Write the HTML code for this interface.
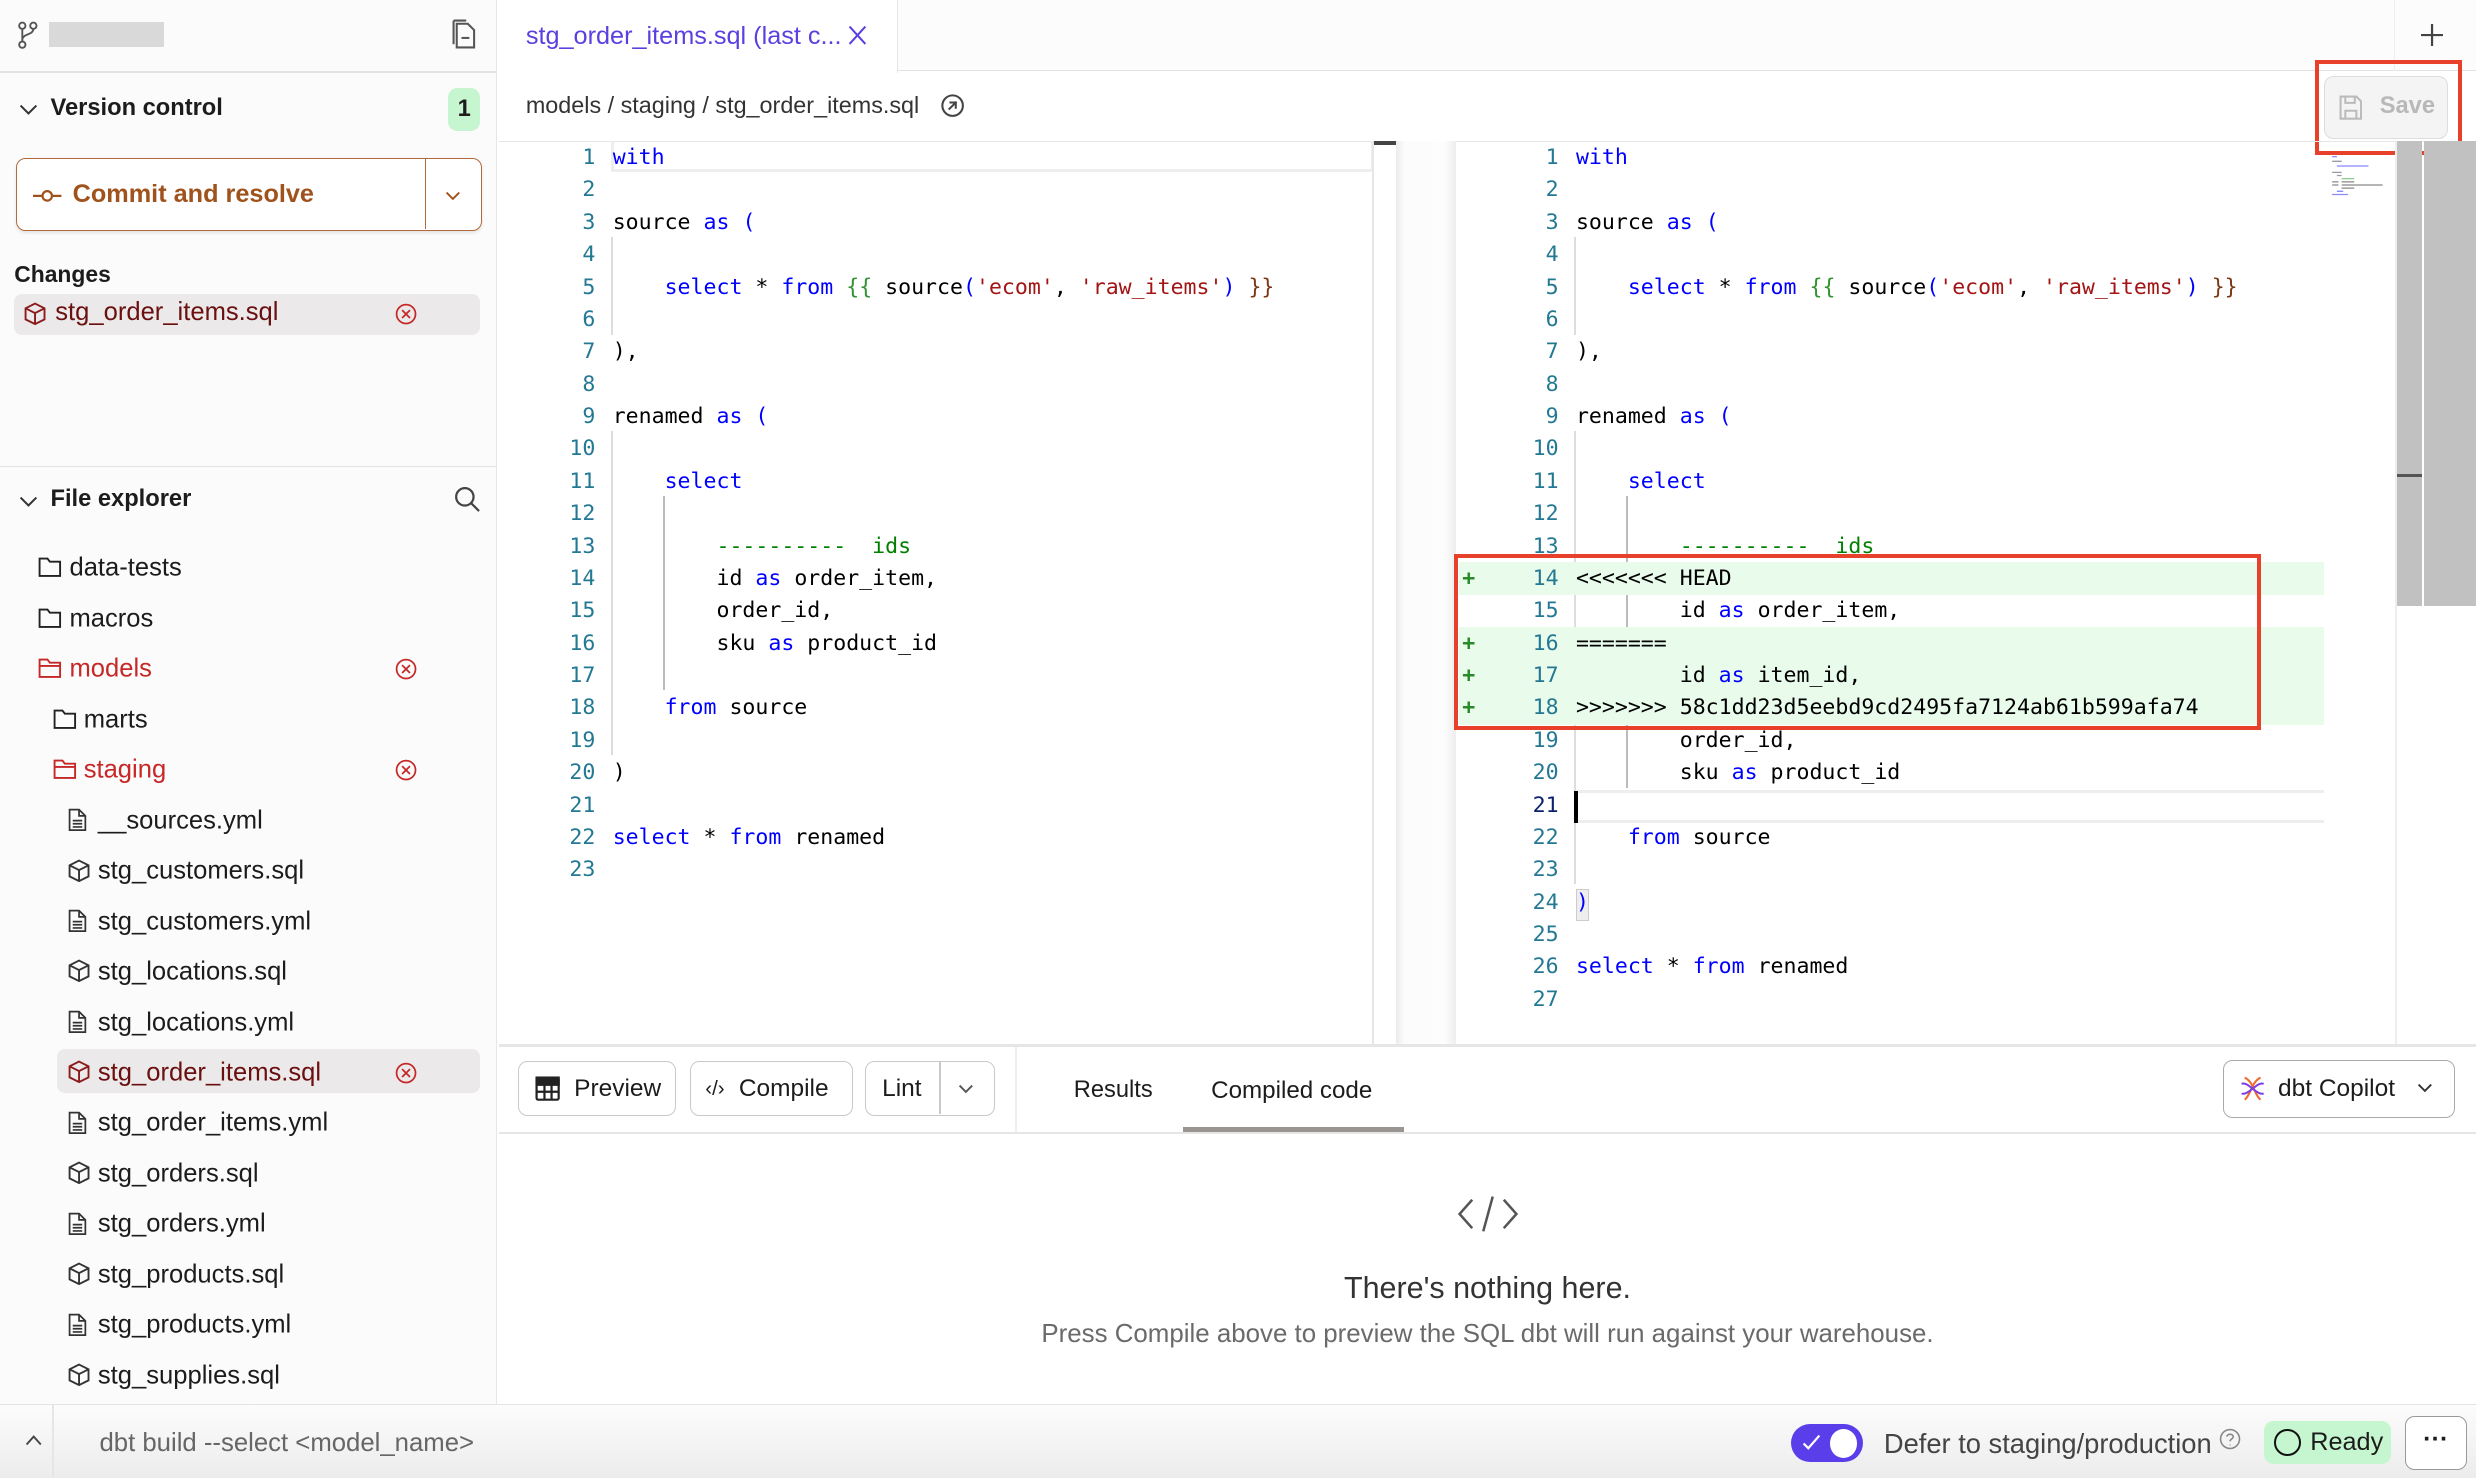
<!DOCTYPE html>
<html><head><meta charset="utf-8">
<style>
html{zoom:1.5791}
*{box-sizing:border-box;margin:0;padding:0}
body{width:1568px;height:936px;overflow:hidden;position:relative;background:#fff;font-family:"Liberation Sans",Arial,sans-serif;color:#1c1c1c}
.a{position:absolute}
.side{left:0;top:0;width:315px;height:890px;background:#fbfbfb;border-right:1px solid #e6e6e6}
.t{position:absolute;font-size:15px;white-space:nowrap}
.tree .t{transform:translateY(-50%);font-size:16.2px}
.code{font-family:"DejaVu Sans Mono","Liberation Mono",monospace;font-size:13.65px;line-height:20.5px;white-space:pre;color:#000}
.num{position:absolute;text-align:right;color:#237893}
.k{color:#0000ff}.s{color:#a31515}.g{color:#008000}.gb{color:#319331}.br{color:#7b3814}
.btn{position:absolute;border:1px solid #c9c9c9;border-radius:6px;background:#fff;font-size:15.5px;display:flex;align-items:center}
</style></head><body>

<!-- SIDEBAR -->
<div class="a side"></div>
<svg class="a" style="left:10px;top:13px" width="16" height="18" viewBox="0 0 16 18" fill="none" stroke="#555" stroke-width="1.2"><circle cx="4" cy="3" r="2"/><circle cx="11" cy="3" r="2"/><circle cx="4" cy="15" r="2"/><path d="M4 5v8M11 5c0 4-7 3-7 7"/></svg>
<div class="a" style="left:31px;top:14px;width:73px;height:16px;background:#d9d9d9"></div>
<svg class="a" style="left:286px;top:12px" width="18" height="20" viewBox="0 0 18 20" fill="none" stroke="#555" stroke-width="1.3"><path d="M3 3h7l4 4v11H3z"/><path d="M1 1v15M1 1h8"/><path d="M6 12h5"/></svg>
<div class="a" style="left:0;top:45px;width:315px;height:1px;background:#e3e3e3"></div>
<svg class="a" style="left:12px;top:66px" width="12" height="8" viewBox="0 0 12 8" fill="none" stroke="#333" stroke-width="1.3"><path d="M1 1l5 5 5-5"/></svg>
<div class="t" style="left:32px;top:60px;font-weight:bold;font-size:15px">Version control</div>
<div class="a" style="left:284px;top:56px;width:20px;height:27px;background:#c6f6cf;border-radius:6px;font-size:15px;text-align:center;line-height:27px;font-weight:bold">1</div>
<div class="a" style="left:10px;top:100px;width:295px;height:46px;border:1px solid #b36a3a;border-radius:6px;background:#fff;box-shadow:0 1px 2px rgba(0,0,0,.1)"></div>
<div class="a" style="left:269px;top:101px;width:1px;height:44px;background:#b36a3a"></div>
<svg class="a" style="left:21px;top:119px" width="18" height="10" viewBox="0 0 18 10" fill="none" stroke="#a0521d" stroke-width="1.4"><circle cx="9" cy="5" r="3"/><path d="M0 5h6M12 5h6"/></svg>
<div class="t" style="left:46px;top:114px;color:#a0521d;font-size:16px;font-weight:bold">Commit and resolve</div>
<svg class="a" style="left:282px;top:121px" width="10" height="7" viewBox="0 0 10 7" fill="none" stroke="#a0521d" stroke-width="1.2"><path d="M1 1l4 4 4-4"/></svg>
<div class="t" style="left:9px;top:165px;font-weight:bold;font-size:14.5px">Changes</div>
<div class="a" style="left:9px;top:186px;width:295px;height:26px;background:#ebe9e9;border-radius:5px"></div>
<div class="t" style="left:35px;top:189px;color:#6b1010;font-size:16.2px">stg_order_items.sql</div>

<div class="a" style="left:0;top:295px;width:315px;height:1px;background:#e3e3e3"></div>
<svg class="a" style="left:12px;top:314px" width="12" height="8" viewBox="0 0 12 8" fill="none" stroke="#333" stroke-width="1.3"><path d="M1 1l5 5 5-5"/></svg>
<div class="t" style="left:32px;top:308px;font-weight:bold;font-size:15px">File explorer</div>
<svg class="a" style="left:287px;top:307px" width="18" height="18" viewBox="0 0 18 18" fill="none" stroke="#444" stroke-width="1.4"><circle cx="7.5" cy="7.5" r="5.5"/><path d="M11.5 11.5l5 5"/></svg>

<div class="a" style="left:36px;top:664px;width:268px;height:28px;background:#ebe9e9;border-radius:5px"></div>
<div class="tree" id="tree"></div>

<!-- MAIN HEADER -->
<div class="a" style="left:316px;top:0;width:1252px;height:45px;background:#fcfcfc;border-bottom:1px solid #e3e3e3"></div>
<div class="a" style="left:316px;top:0;width:253px;height:46px;background:#fff;border-right:1px solid #e6e6e6"></div>
<div class="t" style="left:333px;top:14px;color:#5b3fe0;font-size:16px">stg_order_items.sql (last c...</div>
<svg class="a" style="left:537px;top:16px" width="12" height="13" viewBox="0 0 12 13" stroke="#5b3fe0" stroke-width="1.3"><path d="M1 1l10 11M11 1L1 12"/></svg>
<div class="a" style="left:1516px;top:0;width:1px;height:45px;background:#eee"></div>
<svg class="a" style="left:1533px;top:15px" width="14" height="14" viewBox="0 0 14 14" stroke="#444" stroke-width="1.4"><path d="M7 0v14M0 7h14"/></svg>
<div class="t" style="left:333px;top:58px;color:#333;font-size:14.8px">models / staging / stg_order_items.sql</div>
<svg class="a" style="left:595px;top:59px" width="16" height="16" viewBox="0 0 16 16" fill="none" stroke="#444" stroke-width="1.3"><circle cx="8" cy="8" r="6.5"/><path d="M5.5 10.5l5-5M6 6h4v4"/></svg>
<div class="a" style="left:1472px;top:48px;width:78px;height:40px;background:#f4f4f4;border:1px solid #ddd;border-radius:6px"></div>
<svg class="a" style="left:1481px;top:60px" width="15" height="16" viewBox="0 0 15 16" fill="none" stroke="#bbb" stroke-width="1.3"><path d="M1 1h10l3 3v11H1z"/><path d="M4 1v4h6V1M4 15V10h7v5"/></svg>
<div class="t" style="left:1507px;top:59px;color:#b8b8b8;font-weight:bold;font-size:15px">Save</div>
<div class="a" style="left:1466px;top:38px;width:93px;height:60px;border:3px solid #e8412b"></div>
<div class="a" style="left:316px;top:89px;width:1252px;height:1px;background:#e6e6e6"></div>

<!-- EDITORS -->
<div class="a" style="left:387px;top:89px;width:483px;height:20px;border:2px solid #eee;border-top:none"></div>
<div class="a" style="left:869px;top:89px;width:1px;height:572px;background:#e6e6e6"></div>
<div class="a" style="left:870px;top:89px;width:14px;height:3px;background:#444"></div>
<div class="a" style="left:884px;top:89px;width:38px;height:572px;background:linear-gradient(90deg,#ececec,#fcfcfc 15%,#fdfdfd 80%,#eeeeee)"></div>
<div class="a" style="left:387px;top:150px;width:1px;height:62px;background:#ddd"></div>
<div class="a" style="left:387px;top:273px;width:1px;height:205px;background:#ddd"></div>
<div class="a" style="left:420px;top:314px;width:1px;height:123px;background:#bbb"></div>
<div class="a" style="left:997px;top:150px;width:1px;height:62px;background:#ddd"></div>
<div class="a" style="left:997px;top:273px;width:1px;height:287px;background:#ddd"></div>
<div class="a" style="left:1030px;top:314px;width:1px;height:185px;background:#bbb"></div>

<!-- conflict backgrounds -->
<div class="a" style="left:924px;top:356px;width:548px;height:21px;background:#e9fbea"></div>
<div class="a" style="left:924px;top:397px;width:548px;height:62px;background:#e9fbea"></div>
<div class="a" style="left:998px;top:500px;width:474px;height:21px;border-top:2px solid #eee;border-bottom:2px solid #eee"></div>
<div class="a" style="left:997px;top:501px;width:2px;height:20px;background:#000"></div>
<div class="a" style="left:998px;top:563px;width:8px;height:20px;border:1px solid #ccc;background:#eee"></div>

<div class="a code" id="L" style="left:0;top:90px"></div>
<div class="a code" id="R" style="left:0;top:90px"></div>

<div class="a" style="left:921px;top:351px;width:511px;height:111px;border:3px solid #e8412b"></div>

<!-- minimap & scrollbar -->
<div class="a" style="left:1517px;top:89px;width:1px;height:572px;background:#eee"></div>
<div class="a" style="left:1518px;top:89px;width:16px;height:295px;background:#c1c1c1"></div>
<div class="a" style="left:1535px;top:89px;width:33px;height:295px;background:#c1c1c1"></div>
<div class="a" style="left:1518px;top:300px;width:16px;height:2px;background:#555"></div>
<svg class="a" style="left:1475px;top:98px" width="40" height="26" viewBox="0 0 40 26"><g stroke-width="0.8"><path d="M2 1h3M5 7h20" stroke="#88f"/><path d="M2 4h6M2 11h6M5 13h3" stroke="#99a"/><path d="M8 15h8" stroke="#8c8"/><path d="M2 17h4M8 17h8M2 19h4M8 19h26M8 21h8" stroke="#888"/><path d="M5 23h4M2 25h10" stroke="#88f"/></g></svg>

<!-- BOTTOM PANEL -->
<div class="a" style="left:316px;top:661px;width:1252px;height:2px;background:#e6e6e6"></div>
<div class="btn" style="left:328px;top:672px;width:100px;height:35px"><svg style="margin-left:10px" width="16" height="16" viewBox="0 0 16 16" fill="none" stroke="#222" stroke-width="1.4"><rect x="1" y="1" width="14" height="14" rx="1"/><path d="M1 5.5h14M1 10h14M6 5.5v9.5M10.5 5.5v9.5"/><rect x="1" y="1" width="14" height="4.5" fill="#222"/></svg><span style="margin-left:9px">Preview</span></div>
<div class="btn" style="left:437px;top:672px;width:103px;height:35px"><span style="margin-left:9px;font-size:13px">&lsaquo;/&rsaquo;</span><span style="margin-left:9px">Compile</span></div>
<div class="btn" style="left:548px;top:672px;width:82px;height:35px"><span style="margin-left:10px">Lint</span><span style="position:absolute;left:46px;top:0;width:1px;height:33px;background:#c9c9c9"></span><svg style="position:absolute;left:58px;top:14px" width="10" height="7" viewBox="0 0 10 7" fill="none" stroke="#555" stroke-width="1.2"><path d="M1 1l4 4 4-4"/></svg></div>
<div class="a" style="left:643px;top:663px;width:1px;height:54px;background:#eee"></div>
<div class="t" style="left:680px;top:682px">Results</div>
<div class="t" style="left:767px;top:682px;font-size:15.3px">Compiled code</div>
<div class="a" style="left:749px;top:714px;width:140px;height:3px;background:#9a9590"></div>
<div class="a" style="left:316px;top:717px;width:1252px;height:1px;background:#e6e6e6"></div>
<div class="btn" style="left:1408px;top:671px;width:147px;height:37px;border-color:#aaa"><svg style="margin-left:10px" width="16" height="16" viewBox="0 0 16 16" fill="none" stroke-width="1.3"><path d="M3 1c6 3 6 11 10 14M13 1C7 4 7 12 3 15" stroke="#f06a2a"/><path d="M1 5c4-2 10 8 14 6M1 11c4 2 10-8 14-6" stroke="#7b3fe4"/></svg><span style="margin-left:8px;font-size:15.5px">dbt Copilot</span><svg style="margin-left:14px" width="10" height="7" viewBox="0 0 10 7" fill="none" stroke="#333" stroke-width="1.2"><path d="M1 1l4 4 4-4"/></svg></div>

<svg class="a" style="left:923px;top:757px" width="38" height="24" viewBox="0 0 38 24" fill="none" stroke="#555" stroke-width="1.6"><path d="M9 3L1 12l8 9M29 3l8 9-8 9M22 1l-6 22"/></svg>
<div class="t" style="left:316px;width:1252px;text-align:center;top:805px;font-size:19.3px;color:#333">There's nothing here.</div>
<div class="t" style="left:316px;width:1252px;text-align:center;top:836px;font-size:16.4px;color:#6a6a6a">Press Compile above to preview the SQL dbt will run against your warehouse.</div>

<!-- STATUS BAR -->
<div class="a" style="left:0;top:889px;width:1568px;height:47px;background:linear-gradient(#fcfcfc,#ececec);border-top:1px solid #e3e3e3"></div>
<div class="a" style="left:33px;top:890px;width:1px;height:46px;background:#e6e6e6"></div>
<svg class="a" style="left:16px;top:909px" width="11" height="7" viewBox="0 0 11 7" fill="none" stroke="#444" stroke-width="1.2"><path d="M1 6l4.5-5L10 6"/></svg>
<div class="t" style="left:63px;top:905px;color:#666;font-size:16.3px">dbt build --select &lt;model_name&gt;</div>
<div class="a" style="left:1134px;top:902px;width:46px;height:24px;background:#5a3ee9;border-radius:12px"></div>
<svg class="a" style="left:1141px;top:908px" width="12" height="11" viewBox="0 0 12 11" fill="none" stroke="#fff" stroke-width="1.4"><path d="M1 6l3 3 7-8"/></svg>
<div class="a" style="left:1159px;top:905px;width:17px;height:18px;border-radius:50%;background:#fff"></div>
<div class="t" style="left:1193px;top:904px;font-size:17.3px;color:#444">Defer to staging/production</div>
<svg class="a" style="left:1405px;top:904px" width="14" height="14" viewBox="0 0 14 14" fill="none" stroke="#888" stroke-width="1"><circle cx="7" cy="7" r="6"/><path d="M5 5.5c0-2 4-2 4 0 0 1.5-2 1.5-2 3M7 10.5v.5"/></svg>
<div class="a" style="left:1434px;top:900px;width:80px;height:27px;background:#c6f6cf;border-radius:6px"></div>
<div class="a" style="left:1440px;top:905px;width:17px;height:17px;border-radius:50%;border:1.5px solid #111"></div>
<div class="t" style="left:1463px;top:904px;font-size:16px">Ready</div>
<div class="a" style="left:1523px;top:897px;width:39px;height:34px;border:1px solid #999;border-radius:6px;background:#fff;text-align:center;font-weight:bold;line-height:28px;font-size:16px">&middot;&middot;&middot;</div>

<script>
function esc(s){return s.replace(/&/g,'&amp;').replace(/</g,'&lt;').replace(/>/g,'&gt;')}
const K=s=>'<span class="k">'+s+'</span>',S=s=>'<span class="s">'+s+'</span>',G=s=>'<span class="g">'+s+'</span>';
const sel5='    '+K('select')+' * '+K('from')+' <span class="gb">{{</span> source'+K('(')+S("'ecom'")+', '+S("'raw_items'")+K(')')+' <span class="br">}}</span>';
const left=[K('with'),'','source '+K('as')+' '+K('('),'',sel5,'','),','','renamed '+K('as')+' '+K('('),'','    '+K('select'),'','        '+G('----------  ids'),'        id '+K('as')+' order_item,','        order_id,','        sku '+K('as')+' product_id','','    '+K('from')+' source','',')','',K('select')+' * '+K('from')+' renamed',''];
const right=[K('with'),'','source '+K('as')+' '+K('('),'',sel5,'','),','','renamed '+K('as')+' '+K('('),'','    '+K('select'),'','        '+G('----------  ids'),esc('<<<<<<< HEAD'),'        id '+K('as')+' order_item,','=======','        id '+K('as')+' item_id,',esc('>>>>>>> ')+'58c1dd23d5eebd9cd2495fa7124ab61b599afa74','        order_id,','        sku '+K('as')+' product_id','','    '+K('from')+' source','',K(')'),'',K('select')+' * '+K('from')+' renamed',''];
function render(id,lines,numRight,codeLeft,plus){
 let h='';
 lines.forEach((l,i)=>{
  const top=i*20.5;
  const c=(numRight===987&&i===20)?'#0b216f':'#237893';
  h+='<div class="num" style="left:'+(numRight-40)+'px;width:40px;top:'+top+'px;color:'+c+'">'+(i+1)+'</div>';
  h+='<div style="position:absolute;left:'+codeLeft+'px;top:'+top+'px">'+l+'</div>';
  if(plus&&plus.includes(i+1))h+='<div style="position:absolute;left:926px;top:'+top+'px;color:#2a8a2a;font-weight:bold">+</div>';
 });
 document.getElementById(id).innerHTML=h;
}
render('L',left,377,388);
render('R',right,987,998,[14,16,17,18]);

const cube='<svg width="14" height="15" viewBox="0 0 14 15" fill="none" stroke="COL" stroke-width="1.2"><path d="M7 1l6 3v7l-6 3-6-3V4z"/><path d="M1 4l6 3 6-3M7 7v7"/></svg>';
const file='<svg width="12" height="15" viewBox="0 0 12 15" fill="none" stroke="#333" stroke-width="1.1"><path d="M1 1h6l4 4v9H1z"/><path d="M7 1v4h4M3 8h6M3 10h6M3 12h6"/></svg>';
const fold='<svg width="15" height="13" viewBox="0 0 15 13" fill="none" stroke="COL" stroke-width="1.2"><path d="M1 1h5l1.5 2H14v9H1z"/>EXTRA</svg>';
const err='<svg width="14" height="14" viewBox="0 0 14 14" fill="none" stroke="#c62828" stroke-width="1.1"><circle cx="7" cy="7" r="6"/><path d="M4.5 4.5l5 5M9.5 4.5l-5 5"/></svg>';
const items=[['f',0,'data-tests'],['f',0,'macros'],['fr',0,'models'],['f',1,'marts'],['fr',1,'staging'],['y',2,'__sources.yml'],['c',2,'stg_customers.sql'],['y',2,'stg_customers.yml'],['c',2,'stg_locations.sql'],['y',2,'stg_locations.yml'],['cr',2,'stg_order_items.sql'],['y',2,'stg_order_items.yml'],['c',2,'stg_orders.sql'],['y',2,'stg_orders.yml'],['c',2,'stg_products.sql'],['y',2,'stg_products.yml'],['c',2,'stg_supplies.sql']];
let h='';
items.forEach((it,i)=>{
 const y=360+i*31.95;const ix=24+it[1]*9.5,tx=44+it[1]*9;
 const red=it[0].endsWith('r');const col=red?'#c62828':'#222';
 let ic;
 if(it[0][0]==='f')ic=fold.replace('COL',col).replace('EXTRA',red?'<path d="M1 5h13"/>':'');
 else if(it[0][0]==='c')ic=cube.replace('COL',red?'#8b1a1a':'#333');
 else ic=file;
 h+='<div style="position:absolute;left:'+ix+'px;top:'+(y-8)+'px">'+ic+'</div>';
 h+='<div class="t" style="left:'+tx+'px;top:'+y+'px;color:'+(red?(it[0]==='cr'?'#6b1010':'#c62828'):'#1c1c1c')+'">'+it[2]+'</div>';
 if(red)h+='<div style="position:absolute;left:250px;top:'+(y-7)+'px">'+err+'</div>';
});
document.getElementById('tree').innerHTML=h;
document.getElementById('tree').style.cssText='position:absolute;left:0;top:0;z-index:2';
document.body.insertAdjacentHTML('beforeend','<div style="position:absolute;left:15px;top:191px">'+cube.replace('COL','#8b1a1a')+'</div><div style="position:absolute;left:250px;top:192px">'+err+'</div>');
</script>
</body></html>
